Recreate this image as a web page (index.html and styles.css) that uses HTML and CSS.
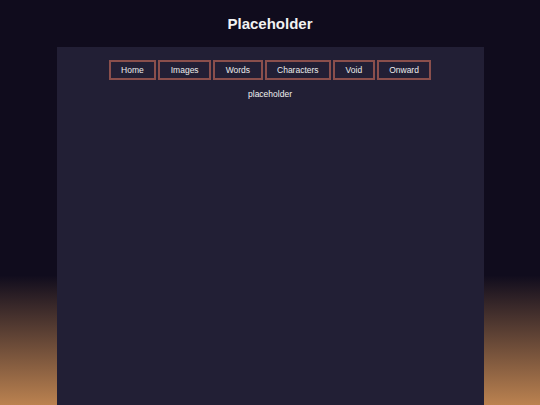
FILE: index.html
```html
<!DOCTYPE html>
<html lang="en">
<head>
    <meta charset="UTF-8">
    <meta name="viewport" content="width=device-width, initial-scale=1.0">
    <title>Placeholder</title>
    <link rel="stylesheet" href="styles.css">
</head>
<body>
    <header class="site-header">
        <h1>Placeholder</h1>
    </header>
    <main class="page">
        <nav class="nav">
            <a href="#">Home</a>
            <a href="#">Images</a>
            <a href="#">Words</a>
            <a href="#">Characters</a>
            <a href="#">Void</a>
            <a href="#">Onward</a>
        </nav>
        <p class="content">placeholder</p>
    </main>
</body>
</html>
```

FILE: styles.css
```css
html {
    height: 100%;
}

body {
    margin: 0;
    min-height: 100%;
    background: linear-gradient(to bottom, #100c1d 68%, #bb8250 100%);
    color: #f2f2f2;
    font-family: "Liberation Sans", Arial, sans-serif;
}

.site-header {
    height: 47px;
    display: flex;
    justify-content: center;
    align-items: center;
}

.site-header h1 {
    margin: 0;
    font-size: 15px;
    font-weight: bold;
}

.page {
    width: 427px;
    min-height: 358px;
    margin: 0 auto;
    background-color: #221f35;
    padding-top: 13px;
    box-sizing: border-box;
}

.nav {
    display: flex;
    justify-content: center;
    gap: 2px;
}

.nav a {
    display: block;
    height: 20px;
    line-height: 16px;
    padding: 0 10.5px;
    border: 2px solid #8a4f4c;
    box-sizing: border-box;
    color: #ececec;
    font-size: 8.5px;
    text-decoration: none;
    text-align: center;
}

.content {
    margin: 9px 0 0;
    text-align: center;
    font-size: 8.5px;
}
```
